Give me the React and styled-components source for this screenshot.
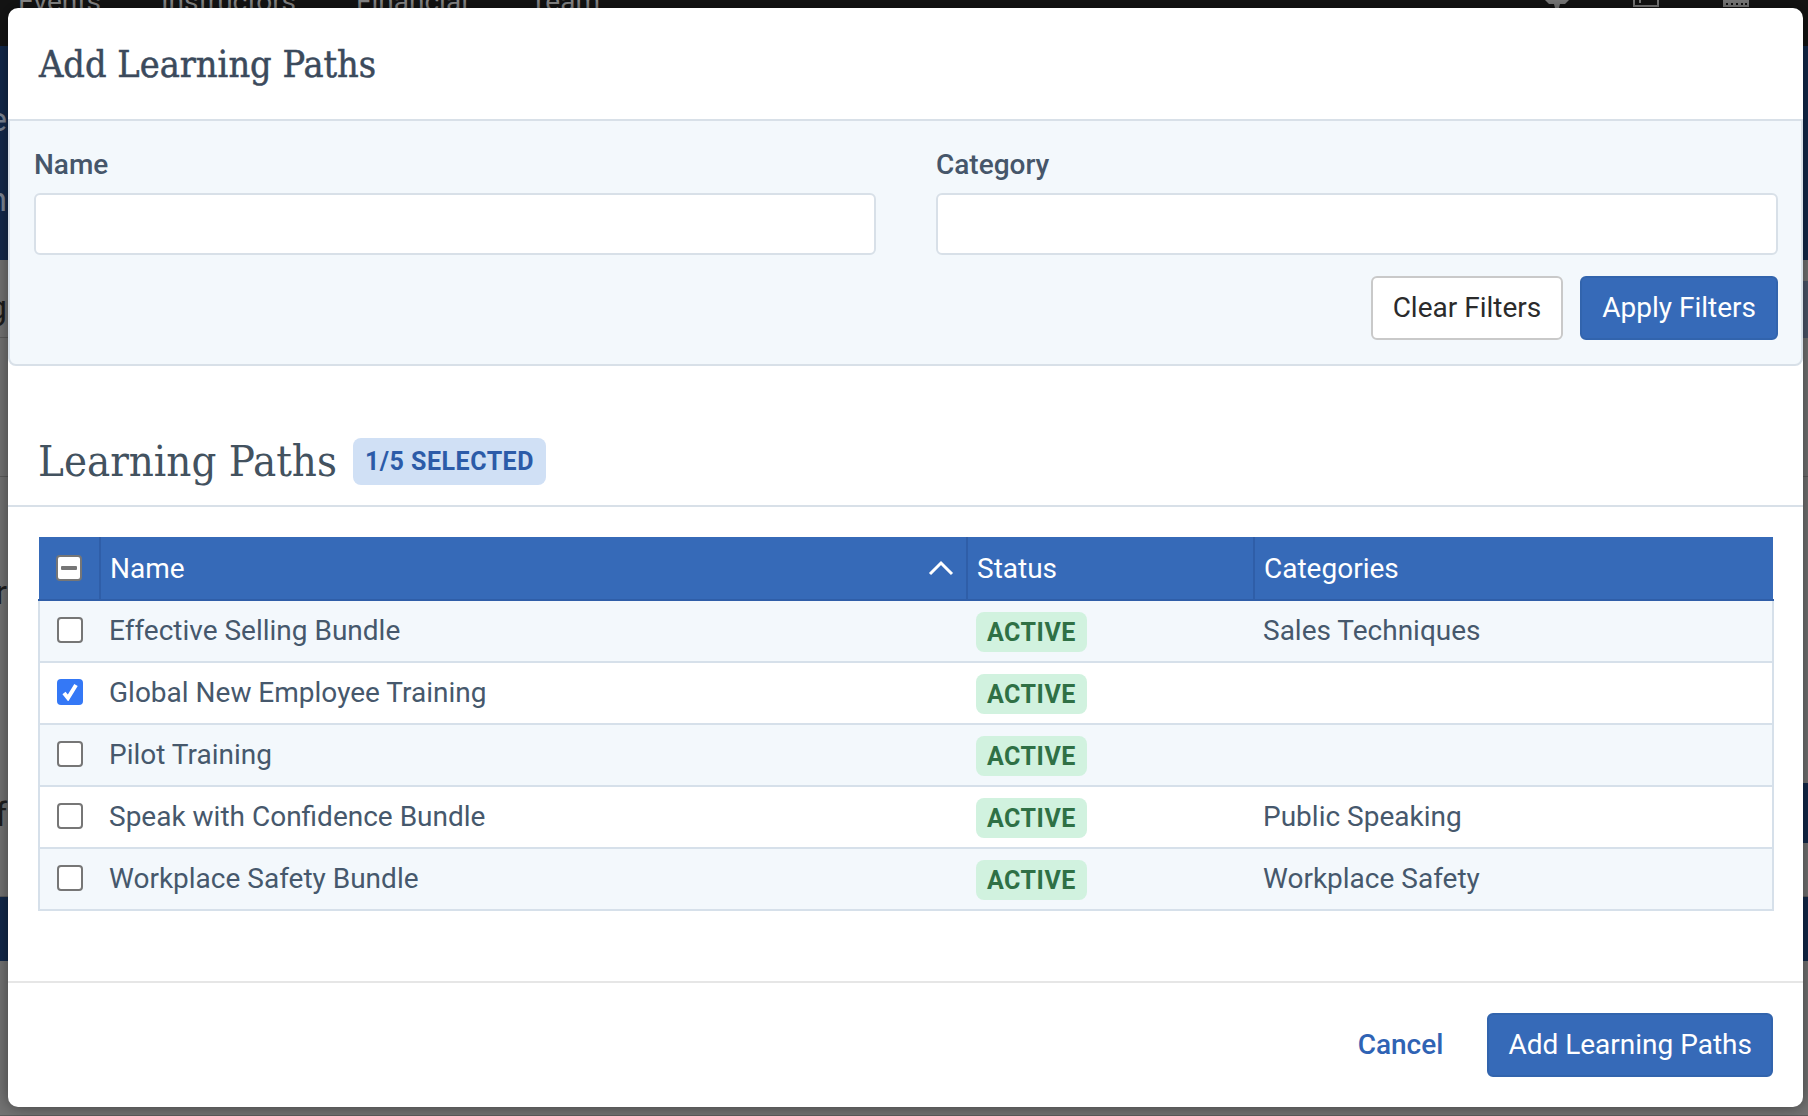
import React from "react";
import styled, { createGlobalStyle } from "styled-components";

const paths = [
  { id: 1, name: "Effective Selling Bundle", status: "ACTIVE", category: "Sales Techniques", checked: false },
  { id: 2, name: "Global New Employee Training", status: "ACTIVE", category: "", checked: true },
  { id: 3, name: "Pilot Training", status: "ACTIVE", category: "", checked: false },
  { id: 4, name: "Speak with Confidence Bundle", status: "ACTIVE", category: "Public Speaking", checked: false },
  { id: 5, name: "Workplace Safety Bundle", status: "ACTIVE", category: "Workplace Safety", checked: false },
];

const GlobalStyle = createGlobalStyle`
  html, body {
    margin: 0;
    padding: 0;
    background: #707070;
  }
  * {
    box-sizing: border-box;
  }
  body {
    font-family: Roboto, "Liberation Sans", sans-serif;
  }
`;

const App = () => {
  return (
    <Page>
      <GlobalStyle />

      {/* page behind the modal */}
      <TopBar>
        <NavItem $width={143}>Events</NavItem>
        <NavItem $width={195}>Instructors</NavItem>
        <NavItem $width={174}>Financial</NavItem>
        <NavItem $width={100}>Team</NavItem>
        <NavIcons>
          <svg width="24" height="8" viewBox="0 0 24 8" fill="#7d7d7d"><path d="M0 0h24L20 4h-5l-1 4h-4L9 4H4z" /></svg>
          <svg width="26" height="8" viewBox="0 0 26 8" fill="none" stroke="#7d7d7d" strokeWidth="2"><path d="M1 0v6h24V0M7 0v3" /></svg>
          <svg width="26" height="8" viewBox="0 0 26 8" fill="#7d7d7d"><path d="M0 0h26v7H0z" /><path d="M3 3h2v2H3zM8 3h2v2H8zM13 3h2v2h-2zM18 3h2v2h-2zM22 3h2v2h-2z" fill="#141414" /></svg>
        </NavIcons>
      </TopBar>
      <BlueBand $height={214}>
        <Fragment $top={56}>e</Fragment>
        <Fragment $top={136}>n</Fragment>
      </BlueBand>
      <GrayBand $height={78}>
        <Fragment $top={30} $dark>g</Fragment>
        <SideBlock $top={21} $height={57} $color="#4c566a" />
      </GrayBand>
      <GrayBand $height={139} />
      <GrayBand $height={420}>
        <Fragment $top={98} $dark>r</Fragment>
        <Fragment $top={320} $dark>f</Fragment>
        <SideBlock $top={306} $height={60} $color="#13294b" />
      </GrayBand>
      <BlueBand $height={64} />
      <GrayBand $height={155} />

      <Modal>
        <ModalHeader>
          <ModalTitle>Add Learning Paths</ModalTitle>
        </ModalHeader>

        <FilterPanel>
          <FilterGrid>
            <Field>
              <FieldLabel>Name</FieldLabel>
              <TextInput type="text" />
            </Field>
            <Field>
              <FieldLabel>Category</FieldLabel>
              <TextInput type="text" />
            </Field>
          </FilterGrid>
          <FilterActions>
            <Button $variant="outline">Clear Filters</Button>
            <Button>Apply Filters</Button>
          </FilterActions>
        </FilterPanel>

        <SectionHeader>
          <SectionTitle>Learning Paths</SectionTitle>
          <CountBadge>1/5 SELECTED</CountBadge>
        </SectionHeader>

        <PathsTable>
          <colgroup>
            <col style={{ width: 61 }} />
            <col style={{ width: 867 }} />
            <col style={{ width: 287 }} />
            <col />
          </colgroup>
          <thead>
            <tr>
              <HeadCell>
                <HeaderCheck>
                  <CheckBar />
                </HeaderCheck>
              </HeadCell>
              <HeadCell>
                <SortLabel>
                  Name
                  <svg width="26" height="16" viewBox="0 0 26 16" fill="none" stroke="#fff" strokeWidth="3">
                    <polyline points="2,14 13,3 24,14" />
                  </svg>
                </SortLabel>
              </HeadCell>
              <HeadCell>Status</HeadCell>
              <HeadCell>Categories</HeadCell>
            </tr>
          </thead>
          <tbody>
            {paths.map((item, index) => (
              <Row key={item.id} $striped={index % 2 === 0}>
                <Cell>
                  <RowCheck $checked={item.checked}>
                    {item.checked && (
                      <svg width="18" height="18" viewBox="0 0 18 18" fill="none" stroke="#fff" strokeWidth="4">
                        <polyline points="3,10 7,15 15,2" />
                      </svg>
                    )}
                  </RowCheck>
                </Cell>
                <Cell>{item.name}</Cell>
                <Cell>
                  <StatusBadge>{item.status}</StatusBadge>
                </Cell>
                <Cell>{item.category}</Cell>
              </Row>
            ))}
          </tbody>
        </PathsTable>

        <ModalFooter>
          <CancelLink>Cancel</CancelLink>
          <Button>Add Learning Paths</Button>
        </ModalFooter>
      </Modal>
    </Page>
  );
};

export default App;

const Page = styled.div`
  position: relative;
  width: 1808px;
  height: 1116px;
  overflow: hidden;
  display: flex;
  flex-direction: column;
`;

const TopBar = styled.div`
  height: 46px;
  flex: none;
  background: #141414;
  display: flex;
  align-items: flex-start;
  padding-left: 18px;
  color: #8c8c8c;
  font-size: 28px;
  line-height: 16px;
`;

const NavItem = styled.div`
  width: ${(p) => p.$width}px;
  margin-top: -6px;
`;

const NavIcons = styled.div`
  position: absolute;
  top: 0;
  right: 59px;
  display: flex;
  gap: 64px;
`;

const BlueBand = styled.div`
  position: relative;
  height: ${(p) => p.$height}px;
  flex: none;
  background: #13294b;
`;

const GrayBand = styled.div`
  position: relative;
  height: ${(p) => p.$height}px;
  flex: none;
  background: #737373;
  border-bottom: 1px solid #5c5c5c;
`;

const SideBlock = styled.div`
  position: absolute;
  top: ${(p) => p.$top}px;
  right: 0;
  width: 8px;
  height: ${(p) => p.$height}px;
  background: ${(p) => p.$color};
`;

const Fragment = styled.span`
  position: absolute;
  top: ${(p) => p.$top}px;
  right: calc(100% - 7px);
  font-size: 34px;
  line-height: 34px;
  color: ${(p) => (p.$dark ? "#1d1d1d" : "#7e8796")};
`;

const Modal = styled.div`
  position: absolute;
  top: 8px;
  left: 8px;
  width: 1795px;
  height: 1099px;
  background: #fff;
  border-radius: 10px;
  box-shadow: 0 0 16px rgba(0, 0, 0, 0.45);
  display: flex;
  flex-direction: column;
`;

const ModalHeader = styled.div`
  height: 111px;
  flex: none;
  display: flex;
  align-items: center;
  padding-left: 31px;
`;

const ModalTitle = styled.h2`
  margin: 0;
  font-family: "DejaVu Serif Condensed", "DejaVu Serif", serif;
  font-size: 37.5px;
  font-weight: 400;
  color: #3b4a5c;
  -webkit-text-stroke: 0.5px #3b4a5c;
`;

const FilterPanel = styled.div`
  flex: none;
  height: 247px;
  background: #f3f8fc;
  border: 2px solid #d8e0e8;
  border-radius: 0 0 8px 8px;
  padding: 28px 23px 0 24px;
`;

const FilterGrid = styled.div`
  display: grid;
  grid-template-columns: 842px 842px;
  column-gap: 60px;
`;

const Field = styled.div`
  display: flex;
  flex-direction: column;
  gap: 12px;
`;

const FieldLabel = styled.label`
  font-size: 28px;
  line-height: 32px;
  font-weight: 500;
  color: #46566a;
`;

const TextInput = styled.input`
  height: 62px;
  background: #fff;
  border: 2px solid #d8e0e8;
  border-radius: 6px;
  outline: none;
`;

const FilterActions = styled.div`
  display: flex;
  justify-content: flex-end;
  gap: 17px;
  margin-top: 21px;

  & > button {
    padding: 0 20px 2px;
  }
`;

const Button = styled.button`
  height: 64px;
  padding: 0 19px 2px;
  font-family: Roboto, "Liberation Sans", sans-serif;
  font-size: 28px;
  border-radius: 6px;
  color: ${(p) => (p.$variant === "outline" ? "#2b2b2b" : "#fff")};
  background: ${(p) => (p.$variant === "outline" ? "#fff" : "#366ab8")};
  border: 2px solid ${(p) => (p.$variant === "outline" ? "#c9c9c9" : "#3264ad")};
`;

const SectionHeader = styled.div`
  flex: none;
  display: flex;
  align-items: center;
  gap: 16px;
  margin-top: 72px;
  padding: 0 0 20px 30px;
  border-bottom: 2px solid #d8e0e8;
`;

const SectionTitle = styled.h2`
  margin: 0;
  font-family: "DejaVu Serif Condensed", "DejaVu Serif", serif;
  font-size: 43.3px;
  line-height: 47px;
  font-weight: 300;
  color: #43525f;
`;

const CountBadge = styled.span`
  height: 47px;
  padding: 0 12px;
  display: flex;
  align-items: center;
  background: #d0e0f5;
  border-radius: 8px;
  color: #2c5ba8;
  font-size: 25px;
  font-weight: 700;
  letter-spacing: 0.5px;
`;

const PathsTable = styled.table`
  flex: none;
  width: 1736px;
  margin: 30px 30px 0;
  table-layout: fixed;
  border-collapse: collapse;
`;

const HeadCell = styled.th`
  height: 63px;
  padding: 0 9px;
  background: #366ab8;
  border-right: 2px solid #2f5ea8;
  border-bottom: 2px solid #2f5ea8;
  color: #fff;
  font-size: 28px;
  font-weight: 400;
  text-align: left;

  &:last-child {
    border-right: none;
  }
`;

const SortLabel = styled.div`
  display: flex;
  align-items: center;
  justify-content: space-between;
  padding-right: 3px;
`;

const HeaderCheck = styled.span`
  margin-left: 8px;
  width: 26px;
  height: 26px;
  display: flex;
  align-items: center;
  justify-content: center;
  background: #fff;
  border: 2px solid #767676;
  border-radius: 4px;
`;

const CheckBar = styled.span`
  width: 16px;
  height: 4px;
  background: #767676;
  border-radius: 1px;
`;

const Row = styled.tr`
  background: ${(p) => (p.$striped ? "#f3f8fc" : "#fff")};
`;

const Cell = styled.td`
  height: 62px;
  padding: 0 9px 2px;
  border-top: 2px solid #d6e0ea;
  border-bottom: 2px solid #d6e0ea;
  color: #46586c;
  font-size: 28px;

  &:first-child {
    border-left: 2px solid #d6e0ea;
  }
  &:last-child {
    border-right: 2px solid #d6e0ea;
  }
`;

const RowCheck = styled.span`
  margin-left: 8px;
  width: 26px;
  height: 26px;
  display: flex;
  align-items: center;
  justify-content: center;
  background: ${(p) => (p.$checked ? "#3478f6" : "#fff")};
  border: ${(p) => (p.$checked ? "none" : "2px solid #767676")};
  border-radius: 4px;
`;

const StatusBadge = styled.span`
  display: inline-flex;
  align-items: center;
  height: 40px;
  padding: 0 11px;
  margin-top: 4px;
  background: #d1f2df;
  border-radius: 8px;
  color: #2f7045;
  font-size: 25px;
  font-weight: 700;
  letter-spacing: 0.5px;
`;

const ModalFooter = styled.div`
  margin-top: auto;
  display: flex;
  align-items: center;
  justify-content: flex-end;
  gap: 44px;
  padding: 30px;
  border-top: 2px solid #e6e6e6;
`;

const CancelLink = styled.a`
  margin-bottom: 2px;
  color: #2f63b4;
  font-size: 28px;
  font-weight: 500;
`;
